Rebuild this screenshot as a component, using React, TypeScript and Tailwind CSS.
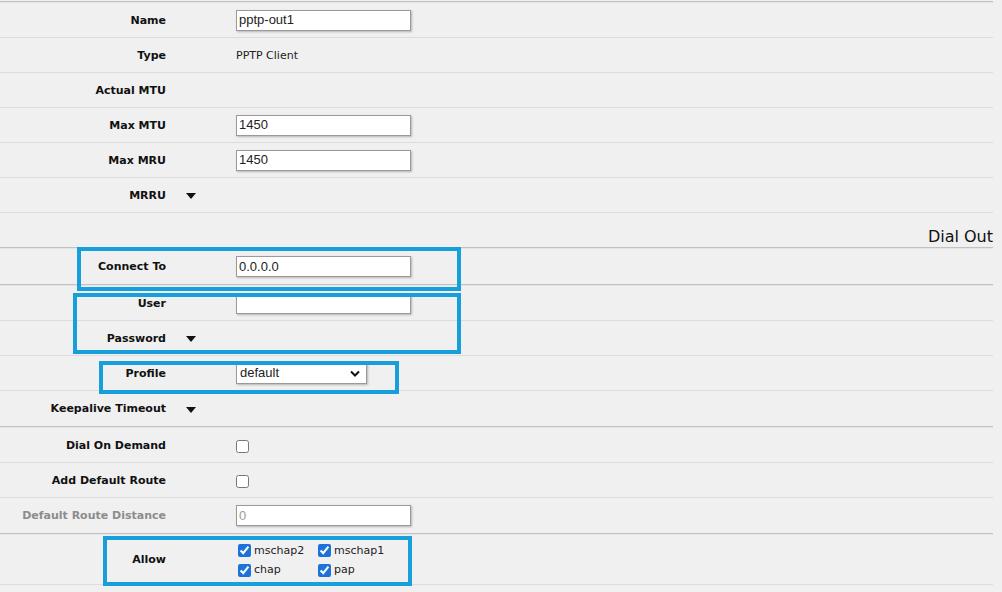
import React from "react";

type RowProps = {
  label: string;
  toggle?: boolean;
  border?: boolean;
  muted?: boolean;
  className?: string;
  children?: React.ReactNode;
};

function Triangle() {
  return (
    <svg width="10" height="6" viewBox="0 0 10 6" className="ml-[20px] shrink-0">
      <path d="M0 0 L10 0 L5 6 Z" fill="#111" />
    </svg>
  );
}

function Row({ label, toggle, border = true, muted, className = "h-[35px]", children }: RowProps) {
  return (
    <div className={`flex items-center pt-[2px] ${className} ${border ? "border-b border-[#dcdcdc]" : ""}`}>
      <div
        className={`w-[166px] shrink-0 text-right text-[11px] font-bold ${muted ? "text-[#8c8c8c]" : "text-[#111]"}`}
      >
        {label}
      </div>
      {toggle ? <Triangle /> : <div className="ml-[70px] flex items-center">{children}</div>}
    </div>
  );
}

function TextBox({ value, muted }: { value: string; muted?: boolean }) {
  return (
    <div
      className={`-mt-[2px] flex h-[21px] w-[175px] items-center border border-[#9a9a9a] bg-white pl-[2px] font-['Liberation_Sans',Arial,sans-serif] text-[13px] shadow-[1px_1px_2px_rgba(0,0,0,0.25)] ${
        muted ? "text-[#9a9a9a]" : "text-[#222]"
      }`}
    >
      {value}
    </div>
  );
}

function Check({ label }: { label: string }) {
  return (
    <label className="flex w-[80px] items-center gap-[3px] text-[11px] text-[#222]">
      <input type="checkbox" defaultChecked className="m-0 h-[13px] w-[13px] accent-[#1b72d8]" />
      {label}
    </label>
  );
}

function Sep() {
  return <div className="h-[2px] border-t border-[#c2c2c2] bg-[#e4e4e4]" />;
}

export default function App() {
  return (
    <div className="relative h-[592px] w-full overflow-hidden bg-[#f0f0f0] font-['DejaVu_Sans',Verdana,sans-serif] text-[#222]">
      <div className="pr-[9px] pt-[1px]">
        <Sep />
        <Row label="Name">
          <TextBox value="pptp-out1" />
        </Row>
        <Row label="Type">
          <span className="text-[11px] text-[#222]">PPTP Client</span>
        </Row>
        <Row label="Actual MTU" />
        <Row label="Max MTU">
          <TextBox value="1450" />
        </Row>
        <Row label="Max MRU">
          <TextBox value="1450" />
        </Row>
        <Row label="MRRU" toggle />

        <div className="flex h-[34px] items-end justify-end pb-0 text-[16px] leading-[20px] text-[#111]">Dial Out</div>
        <Sep />

        <Row label="Connect To" border={false}>
          <TextBox value="0.0.0.0" />
        </Row>
        <Sep />
        <Row label="User">
          <TextBox value="" />
        </Row>
        <Row label="Password" toggle />
        <Row label="Profile">
          <div className="-mt-[2px] flex h-[21px] w-[131px] items-center justify-between border border-[#9a9a9a] bg-white pl-[3px] pr-[6px] font-['Liberation_Sans',Arial,sans-serif] text-[13px] text-[#222] shadow-[1px_1px_2px_rgba(0,0,0,0.25)]">
            default
            <svg width="10" height="7" viewBox="0 0 10 7">
              <path d="M1 1.5 L5 5.5 L9 1.5" fill="none" stroke="#111" strokeWidth="2" />
            </svg>
          </div>
        </Row>
        <Row label="Keepalive Timeout" toggle border={false} />
        <Sep />
        <Row label="Dial On Demand">
          <input type="checkbox" className="m-0 h-[13px] w-[13px]" />
        </Row>
        <Row label="Add Default Route">
          <input type="checkbox" className="m-0 h-[13px] w-[13px]" />
        </Row>
        <Row label="Default Route Distance" muted border={false}>
          <TextBox value="0" muted />
        </Row>
        <Sep />
        <Row label="Allow" className="h-[50px]">
          <div className="ml-[2px] grid grid-cols-2 gap-y-[3px]">
            <Check label="mschap2" />
            <Check label="mschap1" />
            <Check label="chap" />
            <Check label="pap" />
          </div>
        </Row>
      </div>

      {/* annotation boxes */}
      <div className="absolute left-[77px] top-[247px] h-[44px] w-[384px] border-4 border-[#169fdb]" />
      <div className="absolute left-[73px] top-[293px] h-[61px] w-[388px] border-4 border-[#169fdb]" />
      <div className="absolute left-[99px] top-[361px] h-[33px] w-[300px] border-4 border-[#169fdb]" />
      <div className="absolute left-[103px] top-[536px] h-[50px] w-[309px] border-4 border-[#169fdb]" />
    </div>
  );
}
